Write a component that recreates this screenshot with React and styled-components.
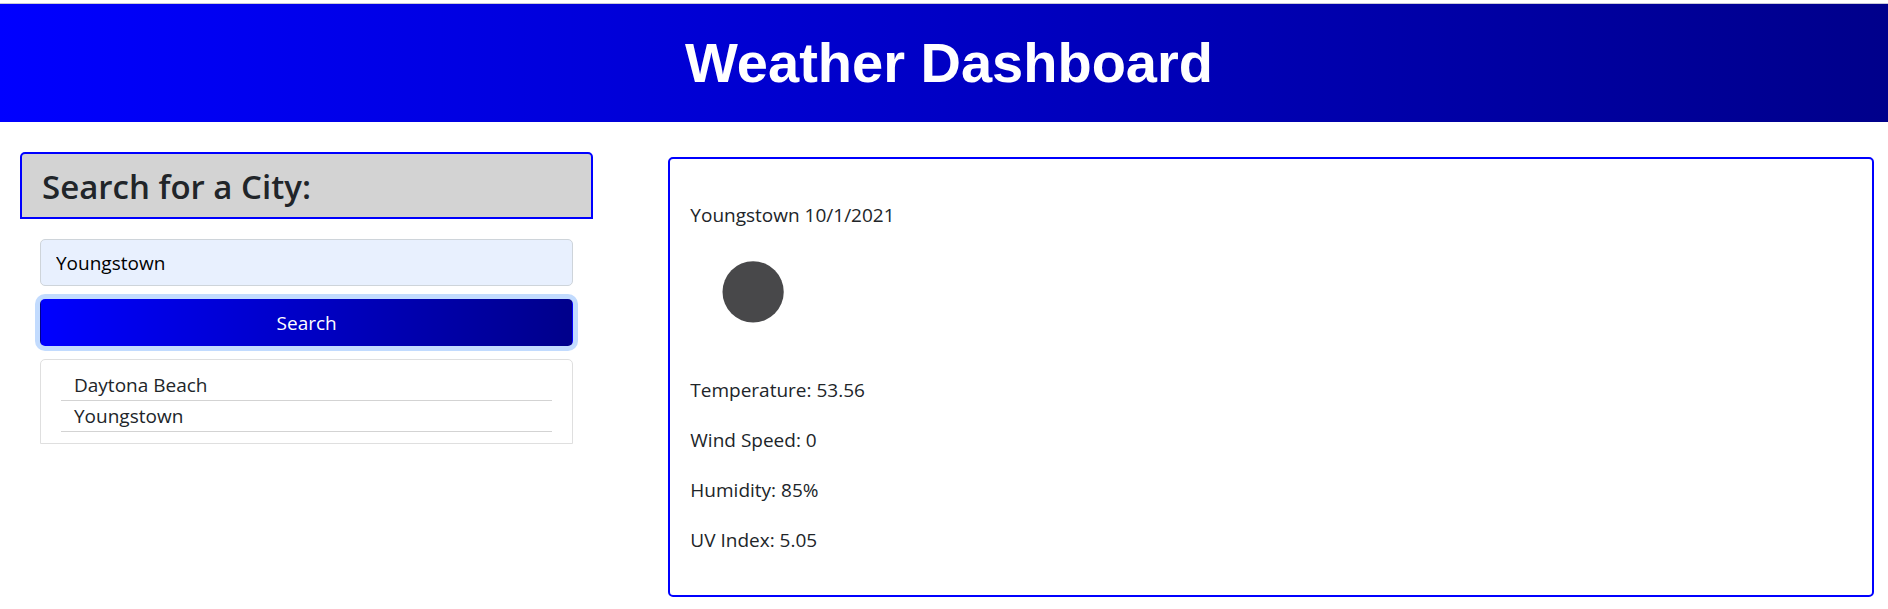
import React, { useState } from "react";
import styled, { createGlobalStyle } from "styled-components";

const GlobalStyle = createGlobalStyle`
  *, *::before, *::after { box-sizing: border-box; }
  body {
    margin: 0;
    background: #fff;
    color: #212529;
    font-family: "Segoe UI", "Open Sans", "Noto Sans", sans-serif;
    font-size: 19px;
    line-height: 30px;
  }
`;

const Page = styled.div`
  padding-top: 3px;
`;

const Header = styled.header`
  border-top: 1px solid #c8c8d8;
  padding: 24px 0 24px 10px;
  background: linear-gradient(to right, blue, darkblue);
  text-align: center;
`;

const Title = styled.h1`
  margin: 0;
  color: #fff;
  font: bold 56px/70px Arial, "Liberation Sans", sans-serif;
`;

const Columns = styled.main`
  display: grid;
  grid-template-columns: 1fr 2fr;
  align-items: start;
`;

const SearchPanel = styled.section`
  padding: 30px 36px 0 20px;
`;

const PanelTitle = styled.h2`
  margin: 0;
  padding: 11px 20px 9px;
  border: 2px solid blue;
  border-radius: 5px 5px 0 0;
  background: lightgray;
  font-size: 33px;
  font-weight: 600;
  line-height: 43px;
`;

const SearchForm = styled.form`
  display: grid;
  gap: 13px;
  padding: 20px 20px 13px;
`;

const CityInput = styled.input`
  width: 100%;
  height: 47px;
  padding: 8px 15px;
  border: 1px solid #ced4da;
  border-radius: 5px;
  background: #e8f0fe;
  color: #000;
  font: inherit;
  outline: none;
`;

const SearchButton = styled.button`
  height: 47px;
  border: 1px solid transparent;
  border-radius: 5px;
  background: linear-gradient(to right, blue, darkblue);
  box-shadow: 0 0 0 5px #c2dbfe;
  color: #fff;
  font: inherit;
  cursor: pointer;
`;

const History = styled.ul`
  list-style: none;
  margin: 0 20px;
  padding: 10px 20px 11px;
  border: 1px solid #dfdfdf;
  border-radius: 5px 5px 0 0;
`;

const HistoryItem = styled.li`
  padding-left: 13px;
  border-bottom: 1px solid lightgray;
`;

const Weather = styled.section`
  margin: 35px 14px 0 39px;
  padding: 41px 20px 20px;
  border: 2px solid blue;
  border-radius: 5px;
`;

const Line = styled.p`
  margin: 0 0 20px;
`;

const Place = styled.p`
  margin: 0;
`;

const Icon = styled.svg`
  display: block;
  width: 125px;
  height: 125px;
  margin-bottom: 20px;
`;

const cities = ["Daytona Beach", "Youngstown"];

const readings = [
  ["Temperature", "53.56"],
  ["Wind Speed", "0"],
  ["Humidity", "85%"],
  ["UV Index", "5.05"],
];

export default function App() {
  const [city, setCity] = useState("Youngstown");
  return (
    <Page>
      <GlobalStyle />
      <Header>
        <Title>Weather Dashboard</Title>
      </Header>
      <Columns>
        <SearchPanel>
          <PanelTitle>
            <label htmlFor="city">Search for a City:</label>
          </PanelTitle>
          <SearchForm onSubmit={(e) => e.preventDefault()}>
            <CityInput id="city" type="text" value={city} onChange={(e) => setCity(e.target.value)} />
            <SearchButton type="submit">Search</SearchButton>
          </SearchForm>
          <History>
            {cities.map((name) => (
              <HistoryItem key={name}>{name}</HistoryItem>
            ))}
          </History>
        </SearchPanel>
        <Weather>
          <Place>Youngstown 10/1/2021</Place>
          <Icon viewBox="0 0 100 100" role="img" aria-label="Clear night">
            <circle cx="50.5" cy="49.5" r="24.5" fill="#48484a" />
          </Icon>
          {readings.map(([label, value]) => (
            <Line key={label}>
              {label}: {value}
            </Line>
          ))}
        </Weather>
      </Columns>
    </Page>
  );
}
